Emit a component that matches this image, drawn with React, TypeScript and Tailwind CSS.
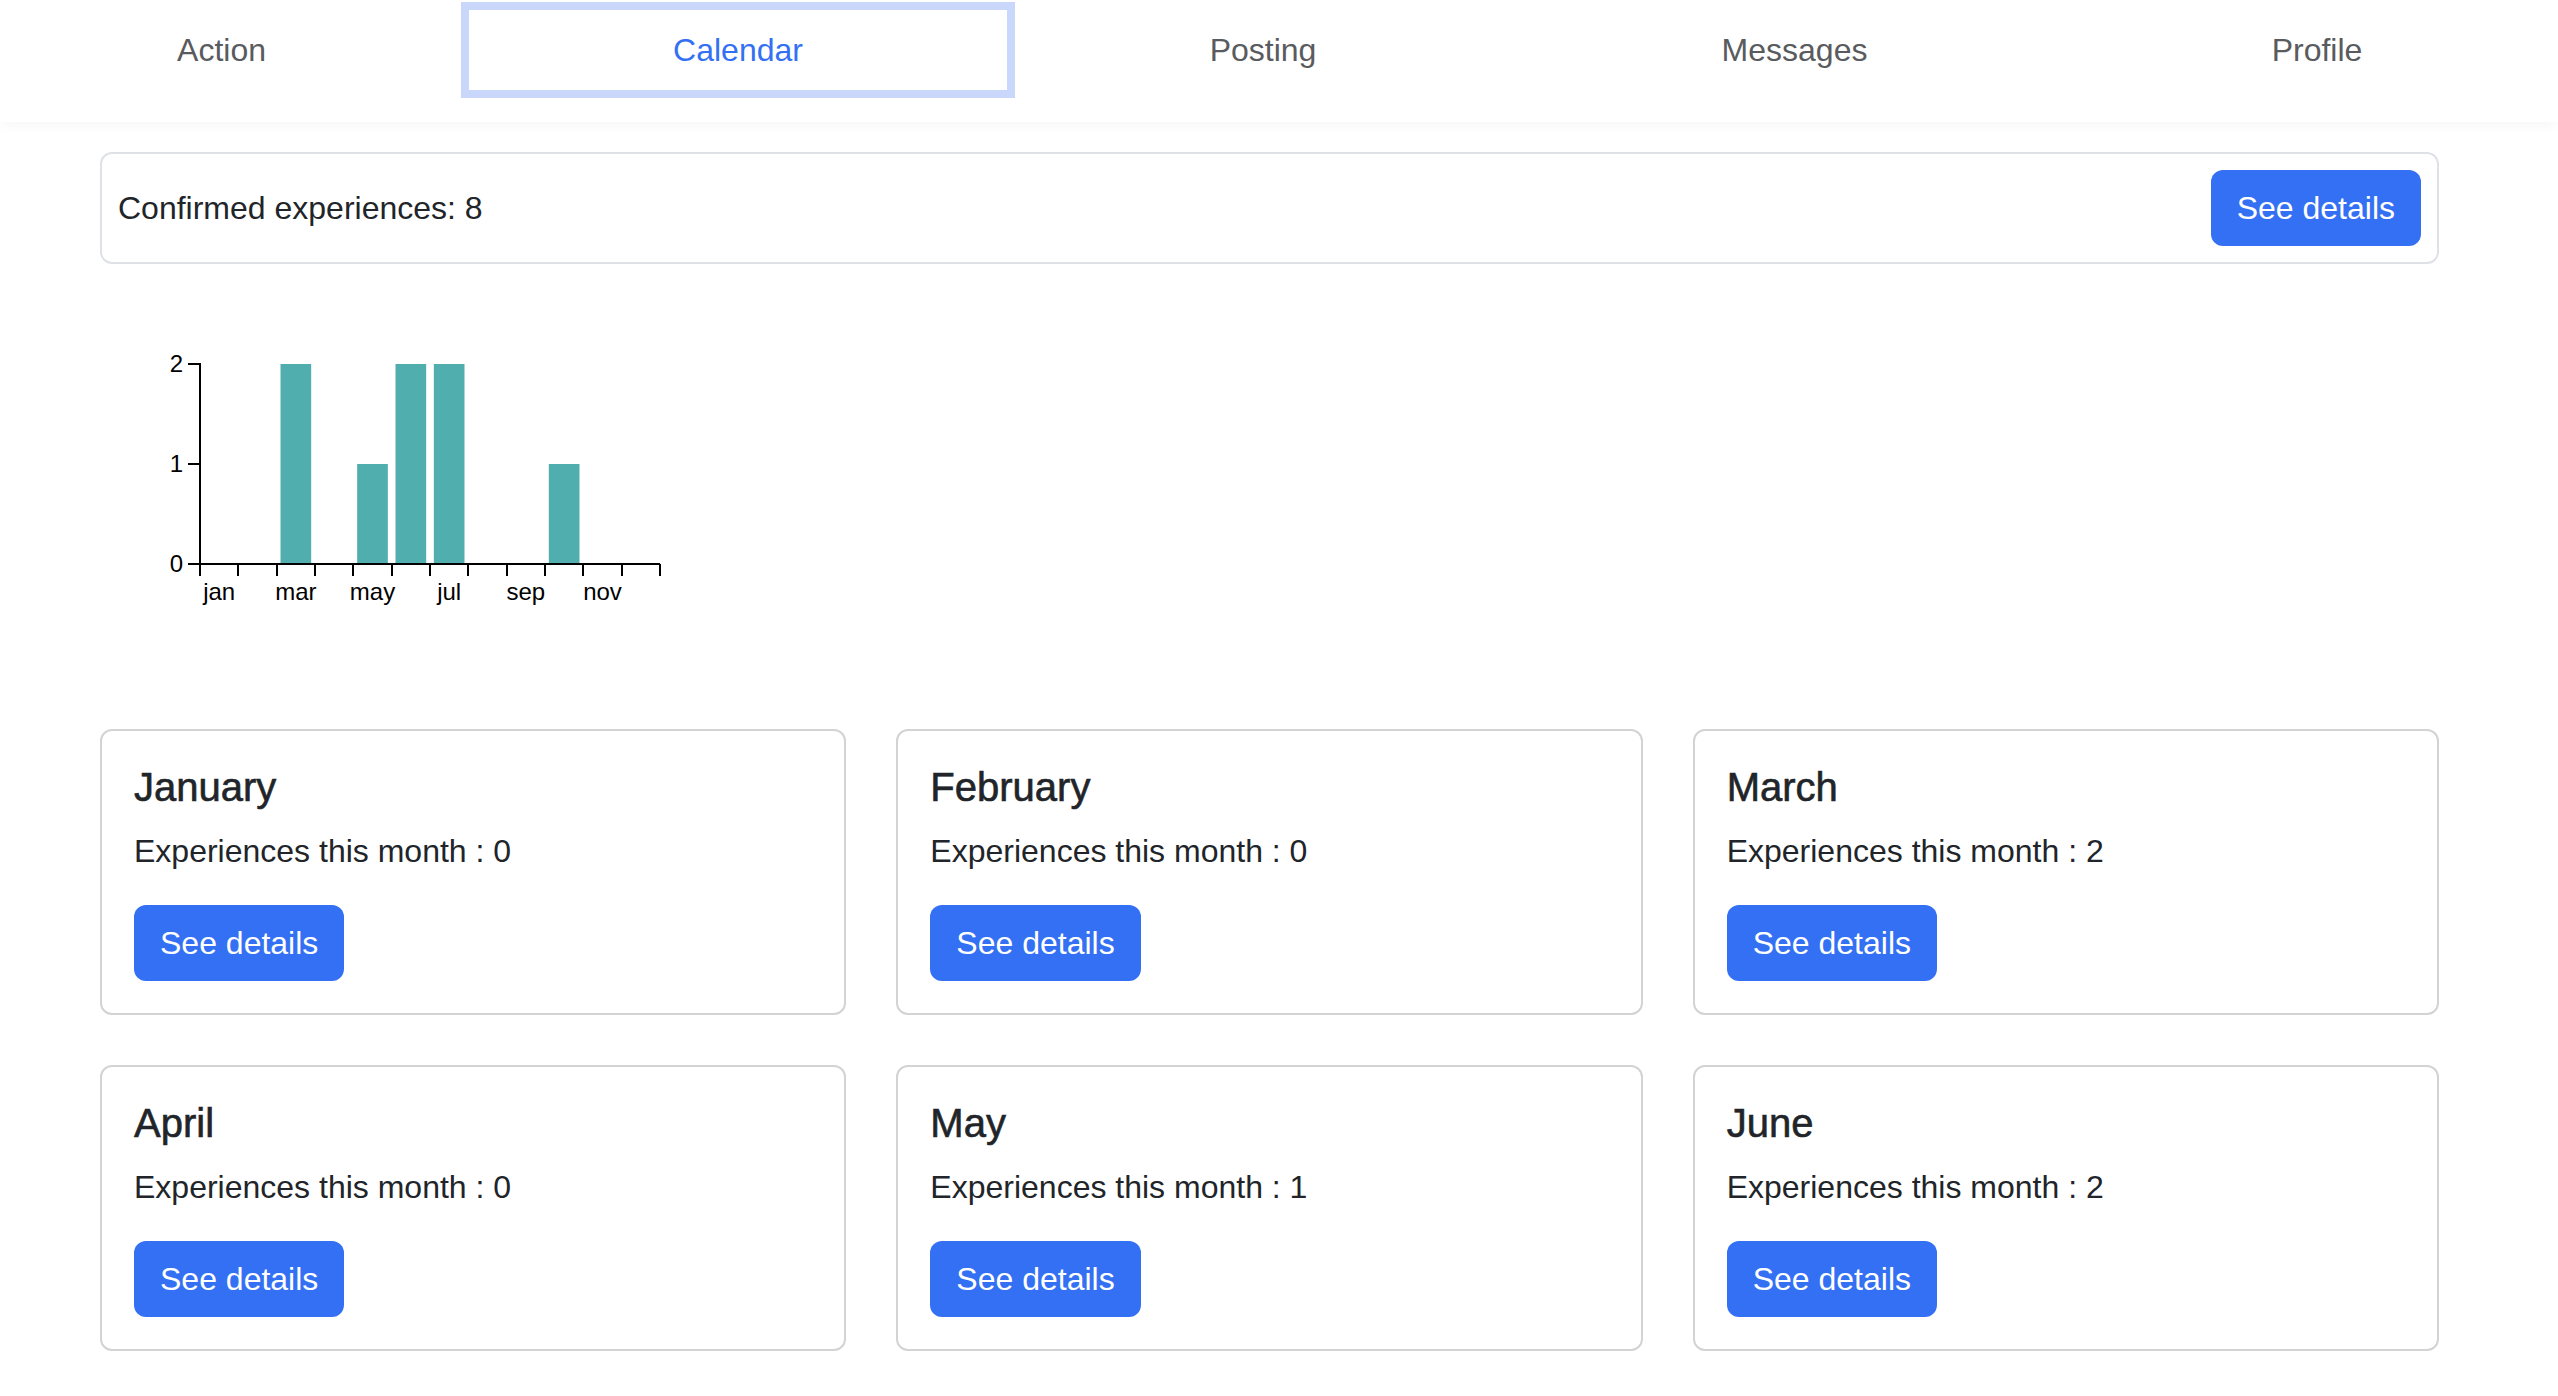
import React from "react";

const tabs = [
  { label: "Action", cls: "w-[495px]", active: false },
  { label: "Calendar", cls: "w-[538px]", active: true },
  { label: "Posting", cls: "w-[512px]", active: false },
  { label: "Messages", cls: "w-[551px]", active: false },
  { label: "Profile", cls: "w-[494px]", active: false },
];

const months = ["January", "February", "March", "April", "May", "June"];

const counts = [0, 0, 2, 0, 1, 2, 2, 0, 0, 1, 0, 0];
const shortNames = ["jan", "feb", "mar", "apr", "may", "jun", "jul", "aug", "sep", "oct", "nov", "dec"];

function Button() {
  return (
    <button className="block h-[76px] rounded-[12px] bg-[#3470f3] px-[26px] text-[32px] leading-[48px] text-white">
      See details
    </button>
  );
}

function Chart() {
  const x0 = 100;
  const y0 = 300;
  const step = 460 / 12;
  const unit = 100;

  return (
    <svg width={700} height={465} className="block" fontFamily="'Liberation Sans', Arial, sans-serif">
      {/* bars */}
      {counts.map((c, i) =>
        c > 0 ? (
          <rect
            key={i}
            x={x0 + i * step + step * 0.1}
            y={y0 - c * unit}
            width={step * 0.8}
            height={c * unit}
            fill="#51aeae"
          />
        ) : null
      )}

      {/* y axis */}
      <g stroke="#000" strokeWidth={2} shapeRendering="crispEdges">
        <path d={`M${x0 - 12},${y0 - 2 * unit} H${x0} V${y0}`} fill="none" />
        {[0, 1, 2].map((v) => (
          <line key={v} x1={x0 - 12} x2={x0} y1={y0 - v * unit} y2={y0 - v * unit} />
        ))}
      </g>
      {[0, 1, 2].map((v) => (
        <text key={v} x={x0 - 17} y={y0 - v * unit} dy="0.35em" textAnchor="end" fontSize={24} fill="#000">
          {v}
        </text>
      ))}

      {/* x axis */}
      <g stroke="#000" strokeWidth={2} shapeRendering="crispEdges">
        <line x1={x0} x2={x0 + 460} y1={y0} y2={y0} />
        {Array.from({ length: 13 }).map((_, i) => (
          <line key={i} x1={x0 + i * step} x2={x0 + i * step} y1={y0} y2={y0 + 12} />
        ))}
      </g>
      {shortNames.map((m, i) =>
        i % 2 === 0 ? (
          <text key={m} x={x0 + i * step + step / 2} y={y0 + 36} textAnchor="middle" fontSize={24} fill="#000">
            {m}
          </text>
        ) : null
      )}
    </svg>
  );
}

export default function App() {
  return (
    <div className="h-screen w-full overflow-hidden bg-white font-['Liberation_Sans',Arial,sans-serif] text-[#212529]">
      {/* Tabs */}
      <nav className="relative z-10 h-[122px] bg-white pt-[10px] shadow-[0_6px_10px_-2px_rgba(0,0,0,0.035)]">
        <div className="-ml-[26px] flex w-[2590px]">
          {tabs.map((t) => (
            <div
              key={t.label}
              className={
                t.active
                  ? `${t.cls} flex h-[80px] items-center justify-center text-[32px] leading-[48px] text-[#3470f3] ring-[8px] ring-[#c9d8fa]`
                  : `${t.cls} flex h-[80px] items-center justify-center text-[32px] leading-[48px] text-[#595b5e]`
              }
            >
              {t.label}
            </div>
          ))}
        </div>
      </nav>

      <main className="ml-[100px] w-[2339px] pt-[30px]">
        {/* Summary */}
        <div className="flex items-center justify-between rounded-[12px] border-2 border-[#dee2e6] p-[16px]">
          <span className="text-[32px] leading-[48px]">Confirmed experiences: 8</span>
          <Button />
        </div>

        <Chart />

        {/* Month cards */}
        <div className="grid grid-cols-3 gap-[50px]">
          {months.map((m, i) => (
            <div key={m} className="rounded-[12px] border-2 border-[#d3d3d3] p-[32px]">
              <h5 className="mb-[16px] text-[40px] font-medium leading-[48px] [-webkit-text-stroke:0.6px]">{m}</h5>
              <p className="mb-[30px] text-[32px] leading-[48px]">Experiences this month : {counts[i]}</p>
              <Button />
            </div>
          ))}
        </div>
      </main>
    </div>
  );
}
